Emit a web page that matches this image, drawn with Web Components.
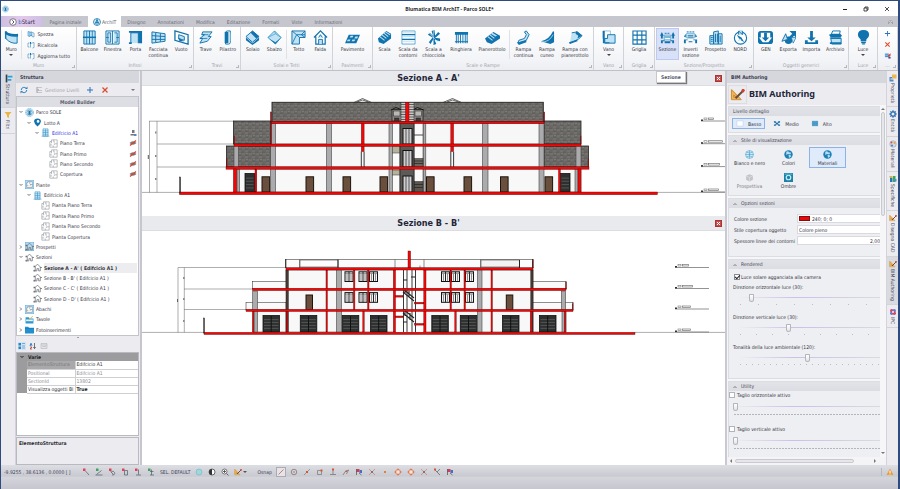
<!DOCTYPE html>
<html lang="it">
<head>
<meta charset="utf-8">
<title>Blumatica BIM ArchIT - Parco SOLE*</title>
<style>
html,body{margin:0;height:100%}
body{font:5px/6px "DejaVu Sans Condensed","DejaVu Sans",sans-serif;color:#34343f;background:#2f4a7d;overflow:hidden}
</style>
</head>
<body>
<bim-app></bim-app>
<script>
const B='#1173ae',L='#bfe2f4',K='#555960';
const p=(d,f='none',s=B,w=1)=>`<path d="${d}" fill="${f}" stroke="${s}" stroke-width="${w}"/>`;
const f=(d,c=B)=>`<path d="${d}" fill="${c}"/>`;
const plan=c=>p('M4.500 1.500H14.500V14.500H1.500V4.500H4.500z',c,'#8a8d92',1)+p('M4.500 4.500v3M8.500 1.500v4h2M14.500 8.500H9.500v2M1.500 10.500h4M7.500 14.500v-3','none','#8a8d92',1);
const house=p('M2 8l6-6 6 6M4 7v7h3v-4h3v4h3V7M1 13h3M13 8h3','none','#6a6d74',1.3)+f('M1 5h3v2H1zM1 13h3v2H1z','#6a6d74');
const snap=(a,c)=>f('M2 1h5v5H2z',c)+p(a,'none','#4f5a66',1.4);
const ICONS={
muro:f('M1 2l2-1v9l-2-1z')+p('M2 2q4 4 12 3v9q-7 1-12-5z',L)+f('M1 1q5 4 14 3v3Q6 8 1 4z'),
mini:p('M2 3l4 1v9l-4-1zM6 4h4v7H6',L)+p('M9 5l5 1v8l-4-1V7','#fff'),
mini2:p('M2 4h3M2 4v8h3M7 5l7-2v10l-3 1M7 4v9','#fff')+f('M6 2h2v4H6z'),
balcone:p('M2 1h12v14H2zM8 1v14',L)+p('M2 8h12M5 1v14M11 1v14','none',B,.8)+f('M1 7h14v1.6H1z'),
finestra:p('M1 1h14v14H1z','#e8f4fa')+p('M8 1v14M3 3h3v10H3zM10 3h3v10h-3M1 8h3M12 8h3',L,B,.9),
porta:p('M2 2h12v12',L)+p('M3 14V3h8v11',L)+f('M1 1h14v2H1zM11 3h4v11h-4zM1 13h3v2H1z'),
facciata:p('M1 2l14 2v8L1 14z',L)+p('M5 3v10M10 3.500v9M1 6l14 1M1 10h14'),
vuoto:p('M1 1l14 4v10L1 11z','#fff',B,1.4)+p('M5 5l6 2v4L5 9z',L)+f('M4 8l7 4H6z'),
trave:p('M5 2h10l-4 5h3l-4 5-8 2 3-5H2l5-4H4z',L)+p('M4 5h7M2 9h8','none',B,.8),
pilastro:p('M6 3q0-2 2-2h3v12q0 2-2 2H6z','#fff')+f('M5 2h4v12H5z')+f('M10 3h1v9h-1z',L),
solaio:p('M8 1l7 6-7 6-7-6z',L)+f('M1 8l7 6 7-6v3l-7 5-7-5z')+f('M8 1l7 6-3 2-6-6z'),
sbalzo:p('M8 1l7 7-6 7-8-7z',L,'#3c9ac9')+p('M8 1l1 3 6 4M9 4L1 8','none','#3c9ac9',.7)+f('M2 9l7 6 6-7-6 5z'),
tetto:p('M1 1h14v7h-6v7H1z',L)+p('M1 1l5 4h9M1 15l5-10M9 8L6 5M15 1l-4 4M15 8l-4-3','none',B,.9),
falda:p('M1 8l7-7 7 7M3 7v8h10V7','#fff',B,1.3)+p('M6 15v-5h4v5M6 8l2-3 2 3',L),
pavimento:f('M4 5h12l-4 9H0z')+f('M6 6h3l-1 2H5zM11 7h3l-1 2h-3zM3 10h3l-1 2H2zM8 10h3l-1 2H7z',L),
scala:f('M1 9L10 1l5 3v5l-8 6-5-2z')+p('M3 7l5 4M5 5l5 4M7 3l5 4M9 2l5 3','none',L,1.1),
contorni:p('M1 1h14M1 15h14M1 1v14M15 1v14','none','#3c9ac9',.8)+p('M1 5h14M1 10h14','none',B,1.4)+p('M2 3h12M2 7h12M2 12h12','none',L,1),
chiocciola:f('M8 8L6 1l3-1 1 8zM8 8l5-6 2 2-6 5zM8 8l7 1v3l-7-2zM8 8l3 7-3 1-1-7zM8 9l-3 6-2-2 4-5zM7 8L2 5l2-2 4 4z')+p('M8 0v15M3 3l10 10','none',L,.6),
ringhiera:f('M1 2h14v3H1zM2 5h1v9H2zM4 5h1v9H4zM6.500 5h1v9h-1zM9 5h1v9H9zM11.500 5h1v9h-1zM13.500 5h1v9h-1zM1 12h14v1H1z'),
pianerottolo:f('M0 9L9 2l7 4v3l-9 6-5-2z')+p('M3 7l5 4M5 5l5 4','none',L,1.1)+f('M8 3l5 3-2 1-5-3z',L),
rampac:p('M2 14l9-3 3-6-3-4-2 1 2 3-2 4-6 2z',L)+f('M1 13h2l8-2v2l-8 3z'),
rampacu:f('M1 12Q10 10 14 1l1 1v11l-4 2z')+p('M1 13q9 0 13-8','none',L,.8),
rampap:p('M4 3l6-1 5 4-4 4-9 4',L)+f('M9 1l6 5-5 3 1-3-3-2zM1 13l9-3v2l-8 3z'),
vano:p('M2 1h8v8H2z','#fff','#8abfdc')+p('M7 5h8v9H4V9h3z',L,B)+f('M2 1h2v12h5v1H2z'),
griglia:p('M1 1h14v14H1zM1 5.500h14M1 10.500h14M5.500 1v14M10.500 1v14','#fff',B,1.2),
sezione:p('M4.500 5.500h7v5h-7z','#f2f8fd','#3c9ac9',.8)+`<path d="M5 3.500h6" stroke="${B}" stroke-dasharray="2 1"/>`+f('M0 6l2-4 2 4H3v3H1V6zM16 6l-2-4-2 4h1v3h2V6zM5 7h6v1H5zM1 11h4v1H3v2H1zM15 11h-4v1h2v2h2zM5 12h6v2H5z'),
inverti:p('M4 3.500h8v5H4z','#fff','#3c9ac9',.8)+`<path d="M4 2h8" stroke="${B}" stroke-dasharray="2 1"/>`+f('M5 5h6v1H5zM5 7h6v1H5zM1 7l2-3v4zM15 7l-2-3v4zM1 10h4v1H3v3H1zM15 10h-4v1h2v3h2zM6 12h4v1H6z'),
prospetto:p('M2 6h4v9H2zM6 2l5-1v14H6zM11 4h4v11h-4z',L)+p('M3 8h2M3 10h2M3 12h2M8 4v9M13 6v7M10 4v9'),
nord:`<circle cx="8" cy="8.500" r="6.500" fill="#fff" stroke="${B}" stroke-width="1.200"/>`+f('M4 5l5 3 3 5-5-3z')+f('M5 12l2-3 2 1zM6 0h4v5H6z',L)+p('M6 5V1l4 4V1'),
gen:`<rect x="0" y="1" width="16" height="14" rx="3" fill="${B}"/>`+f('M3 3h10v5h2l-4 5H5L1 8h2z','#fff')+f('M6.500 3h3v5h2.500L8 12 4 8h2.500z'),
esporta:f('M9 1h7v7l-2-2-4 4-2-2 4-4z')+`<circle cx="8" cy="11" r="4" fill="${B}"/>`+p('M1 12L5 4l2 6z',L)+p('M11 8h5l-3 6z',L,B,.7),
importa:f('M6.500 1h3v7h3L8 12 3.500 8h3zM1 11h3v2h8v-2h3v4H1z'),
archivio:p('M3 6l2-5h8l-1 5','#fff')+f('M1 5l3-1h9l2 2-2 2H3z')+p('M3 9h11v6H4z',L)+f('M2 13h12v2H2zM2 8h12v1H2z'),
luce:f('M8 0q6 0 6 5 0 3-3 5v2H5v-2Q2 8 2 5q0-5 6-5zM5.500 12.500h5V14h-5zM6.500 14.500h3v1h-3z'),
plus:f('M7 2h2v5h5v2H9v5H7V9H2V7h5z','#2e6fc0'),
cross:p('M3 3l10 10M13 3L3 13','none','#e0482c',2.4),
dbdel:f('M2 3h9v9H2z','#7db0dc')+f('M3 6h7v1H3zM3 9h7v1H3z','#3568a6')+f('M9 8l6-5v5l-4 4z','#d04040')+f('M10 11h5v4h-5z','#444c88'),
start:`<circle cx="8" cy="8" r="6.500" fill="#fff" stroke="#333" stroke-width="1.200"/>`+p('M6.500 4.500L10 8l-3.500 3.500','none','#222',1.5),
archit:`<circle cx="8" cy="8" r="7" fill="#d9eefa" stroke="${B}" stroke-width="1.500"/>`+p('M4 12l4-9 4 9M5 9h6M8 3v11','none',B,1.6),
refresh:p('M2.500 8a5.500 5.500 0 0 1 10-3M13.500 8a5.500 5.500 0 0 1-10 3','none','#2e83c0',2)+f('M10 6h5V1zM6 10H1v5z','#2e83c0'),
levels:f('M3 2h2v12H3zM5 3h9v1H5zM5 8h9v1H5zM5 12h9v1H5z','#9fa2a8')+f('M3 6h5v4H3z','#b7b9be'),
model:`<circle cx="8" cy="8" r="7" fill="#d7edf9" stroke="#3c9ac9" stroke-dasharray="3 1"/><circle cx="8" cy="8" r="4.500" fill="#fff" stroke="${B}"/>`+f('M6 5h4v7H6z'),
pin:f('M8 1q6 0 6 5 0 4-6 9-6-5-6-9 0-5 6-5z')+`<circle cx="9" cy="6" r="2.300" fill="#fff"/>`,
building:p('M3.500 1.500h9v13h-9z','#d9eefa','#2e8ec4')+p('M8 2v12M3 5h10M3 8h10M3 11h10M1 14.500h14','none','#2e8ec4',1),
plan:plan('#fff'),planb:`<rect width="16" height="16" fill="#b5daf0" stroke="#3c9ac9"/>`+p('M5 3h8v10H3V5h2zM8.500 3v4M13 8H9v2M3 9.500h3','#fff','#7d868e',1),
house:house,houseb:`<rect width="16" height="16" fill="#b5daf0" stroke="#3c9ac9"/>`+house,
tavole:f('M1 4h6l1 2h7v9H1z','#2e9ad2')+f('M2 8h12v3H2z','#e8f5fc')+p('M6 9l8-7','none','#e6b43c',1.6),
foto:f('M0 3h6l1 2h9v10H0z','#2090d0')+f('M0 6h16v1H0z','#1678b4'),
user:f('M6 2h5v6H6zM3 10h10v3H3z','#74777d')+f('M10 10h5v4h-5z','#5d85b5'),
eyeoff:f('M1 8q7-7 14 0-7 7-14 0z','#7a7a80')+p('M2 13L14 3','none','#d8442c',2.4),
az:f('M3 2h2l2 6H5V6H3.500v2H1z','#2e83c0')+p('M2 10h4l-4 4h4','none','#b03030',1.400)+p('M11 2v11M8.500 10l2.500 3 2.500-3','none','#333',1.3),
cat:f('M1 2h5v5H1zM1 9h5v5H1z','#2e83c0')+f('M8 2h6v2H8zM8 6h6v1H8zM8 9h6v2H8zM8 13h6v1H8z','#7ba9cb'),
page:p('M2 3h12v10H2zM2 6h12M5 9h7','#e3e4e8','#aaacb2',1),
dock:f('M3 1h3v14H3z','#3a3f48')+f('M6 3h9v3H6zM6 9h7v3H6z','#2aa0dc'),
filter:f('M1 2h14l-5 6v6l-4-2V8z','#eeb345'),
set:f('M1 3l1-1 10 11H1z','#f2b65a')+p('M1.500 3v10.500H12zM4 8.500v2.500h3z','none','#c98a34',1)+p('M6 12l8-8','none','#6b4b3a',2)+f('M13 2l2 0 1 2-2 2-2-2z','#d4432f'),
prop:f('M1 6h8v9H1z','#5089c4')+f('M6 1h9v8H6z','#eeb651')+f('M3 9h7v2H3z','#e8f0fa'),
gear:`<circle cx="8" cy="8" r="4.500" fill="none" stroke="#2e74b8" stroke-width="3"/>`+p('M8 0v3M8 13v3M0 8h3M13 8h3M2.500 2.500l2 2M11.500 11.500l2 2M2.500 13.500l2-2M11.500 4.500l2-2','none','#2e74b8',1.8),
palette:`<circle cx="8" cy="8" r="6.500" fill="#d6dae2" stroke="#8c93a0"/><circle cx="5" cy="5" r="2" fill="#e05040"/><circle cx="11" cy="6" r="2" fill="#e9a23b"/><circle cx="6" cy="11" r="2" fill="#3e82c6"/>`,
spec:f('M2 5h5v9H2z','#2b74b5')+f('M8 2h5v12H8z','#3fa456')+f('M1 2h6v3H1z','#e1b33c')+f('M11 8h4v5h-4z','#3a9bd6'),
ifc:`<circle cx="5.500" cy="5.500" r="3.500" fill="#d34560"/><circle cx="10.500" cy="5.500" r="3.500" fill="#6d77c9"/><circle cx="5.500" cy="10.500" r="3.500" fill="#6d77c9"/><circle cx="10.500" cy="10.500" r="3.500" fill="#d34560"/><circle cx="8" cy="8" r="1.800" fill="#fff"/>`,
medio:f('M1 3h5v3H1zM10 3h5v3h-5zM5 6h6v4H5zM1 10h5v3H1zM10 10h5v3h-5z','#2e83ba')+p('M1 3l14 10M15 3L1 13','none','#1c5b88',1),
alto:f('M1 2h14v12H1z','#5fa9d4')+p('M1 5h14M1 8h14M1 11h14M4 2v12M8 2v12M12 2v12','none','#3b88b8',.8),
basso:p('M1 2h14v12H1z','#fff','#b6c6da',1),
globe:`<circle cx="8" cy="8" r="7" fill="#d8edf8" stroke="#3c9ac9"/>`+p('M1 8h14M8 1v14M3 4q5 3 10 0M3 12q5-3 10 0','none','#3c9ac9',1),
globec:`<circle cx="8" cy="8" r="7.500" fill="#1f7fb5"/>`+f('M4 3q4-2 5 1l4 1-2 3-4-1-3 2zM8 9q4-1 5 2l-4 3z','#aee0f5'),
persp:f('M8 2l6 3v7l-6 3-6-3V5z','#c3c4c8')+p('M2 5l6 3 6-3M8 8v7','none','#e8e8ea',1),
ombre:`<rect width="16" height="16" fill="#1f7fa8"/><circle cx="8" cy="8" r="4" fill="none" stroke="#bff0fa" stroke-width="2.200"/>`+f('M1 1h14v2H1z','#54b5d0'),
s1:snap('M7 6l7 8','#e0405a'),s2:snap('M1 14h14M3 13L13 5','#3da35a'),s3:snap('M6 8q5-4 7 1t-5 5M5 7l6 6','#e0405a'),s4:snap('M7 5h6v9H7z','#e0405a'),s5:snap('M9 3v10M4 14h10','#e0405a'),s6:snap('M6 7h7M9 3v11M6 14h8','#3da35a'),
world:`<circle cx="8" cy="8" r="6" fill="#9fd7dc" stroke="#57b4bb"/>`,half:`<circle cx="8" cy="8" r="6" fill="#fff" stroke="#333" stroke-width="1.400"/>`+f('M8 2v12a6 6 0 0 1 0-12z','#333'),
lens:`<circle cx="7" cy="7" r="5" fill="#fff" stroke="#444" stroke-width="1.400"/>`+p('M11 11l4 4M7 4v6M4 7h6','none','#444',1.6),
line:p('M3 13L13 3','none','#d8542e',1.5),circ:`<circle cx="8" cy="8" r="5.500" fill="none" stroke="#666" stroke-width="1.300"/><circle cx="8" cy="8" r="1.500" fill="#d8542e"/>`,
mid:p('M2 14L14 2','none','#777',1.3)+f('M6 6h4v4H6z','#d8542e'),box:p('M3 5h8v8H3z','none','#666',1.2)+f('M9 3h4v4H9z','#d8542e'),
perp:p('M8 3v10M2 13h12','none','#666',1.300)+f('M6 1h4v4H6z','#d8542e'),tan:p('M2 14q3-9 12-10M9 12l4-8','none','#666',1.3)+f('M7 5h3v3H7z','#d8542e'),
flag:f('M3 2h6v6H3z','#d33f52')+f('M9 4h5v6H9z','#4c6bc5')+p('M3 2v12M8 10l5 4','none','#444',1.3),
xx:p('M2 2l12 12M14 2L2 14','none','#d8542e',1)+f('M6 6h4v4H6z','#777'),dot:f('M6 6h4v4H6z','#e0803c'),
quad:`<circle cx="8" cy="8" r="5" fill="#fbe4d8" stroke="#d8744e" stroke-width="1.600"/>`+p('M8 1v4M8 11v4M1 8h4M11 8h4','none','#d8542e',1.5),
rays:p('M2 2l12 12M14 2L8 8','none','#555',1.300)+f('M2 1h4v4H2z','#d8542e'),
warn:f('M8 1l7 13H1z','#e89c3a')+f('M7 5h2v5H7zM7 11h2v2H7z','#fff')
};
function define(tag,css,html,setup){
  const t=document.createElement('template');
  t.innerHTML=`<style>*{box-sizing:border-box}button,input,select{font:inherit;color:inherit;margin:0;padding:0;border:0;background:none;border-radius:0}${css}</style>${typeof html==='string'?html:''}`;
  customElements.define(tag,class extends HTMLElement{
    connectedCallback(){
      if(this.shadowRoot)return;
      const root=this.attachShadow({mode:'open'});
      root.append(t.content.cloneNode(true));
      if(typeof html==='function')root.innerHTML+=html(this,n=>this.getAttribute(n)||'');
      if(setup)setup(this,root);
    }
  });
}
define('ui-icon',`:host{display:block;flex:none;width:8px;height:8px}svg{display:block;width:100%;height:100%}`,
 (e,a)=>`<svg viewBox="0 0 16 16" aria-hidden="true">${ICONS[a('name')]||''}</svg>`);

/* ---------- window chrome ---------- */
define('title-bar',`:host{display:grid;grid-template-columns:1fr auto 1fr;align-items:center;height:15px;background:#fff;font:bold 5px/6px "Noto Sans",sans-serif;color:#2a2a33}
ui-icon{width:7px;margin-left:1px}nav{display:flex;justify-content:flex-end;gap:15px;padding-right:8px}button{width:6px;height:8px}svg{display:block;width:6px;height:8px}`,
`<ui-icon name="model"></ui-icon><span>Blumatica BIM ArchIT - Parco SOLE*</span><nav>
<button aria-label="Riduci"><svg viewBox="0 0 6 8"><path d="M1 4.500h4" stroke="#222"/></svg></button>
<button aria-label="Ripristina"><svg viewBox="0 0 6 8"><path d="M1 3h3v3H1zM2 3V2h3v3H4" fill="none" stroke="#222" stroke-width=".8"/></svg></button>
<button aria-label="Chiudi"><svg viewBox="0 0 6 8"><path d="M1 2l4 4M5 2L1 6" stroke="#222" stroke-width=".8"/></svg></button></nav>`);
define('ribbon-tabs',`:host{display:flex;align-items:stretch;height:11px;background:#c6c7ce}
button{display:flex;align-items:center;justify-content:center;gap:1px;color:#6a6b74;flex:none;padding:0 6px;white-space:nowrap}
.start{background:linear-gradient(90deg,#cdbfe0,#e3c9ec 50%,#cdbfe0);color:#2c2848;font-size:6px;width:42px;padding:0}.start b{color:#2a78c8;font-weight:400}
.home{width:45px;padding:0}.on{background:#fff;color:#4f5a66;padding:0 5px}i{flex:1}.up{padding:0 5px}.up svg{width:5px;height:5px}`,
`<button class="start"><ui-icon name="start"></ui-icon><span><b>b</b>Start</span></button><button class="home">Pagina iniziale</button><button class="on"><ui-icon name="archit"></ui-icon>ArchIT</button>
<button>Disegno</button><button>Annotazioni</button><button>Modifica</button><button>Editazione</button><button>Formati</button><button>Viste</button><button>Informazioni</button><i></i><button class="up" aria-label="Comprimi"><svg viewBox="0 0 5 5"><path d="M.5 3l2-2 2 2v1.500l-2-2-2 2z" fill="#fff" stroke="#777" stroke-width=".6"/></svg></button>`);
define('ribbon-group',`:host{display:flex;flex-direction:column;min-width:0;border-right:1px solid #d2d3d9;background:linear-gradient(#fff,#f3f4f7 75%,#eceef2);position:relative}
.c{display:flex;flex:1;padding:1px 1px 0}.k{height:9px;line-height:8px;text-align:center;color:#a3a4ac;white-space:nowrap}
.k::after{content:"";position:absolute;right:1px;bottom:2px;border:1px solid #b4b5bd;border-width:0 1px 1px 0;width:2px;height:2px}`,
 (e,a)=>`<div class="c"><slot></slot></div><div class="k">${a('caption')}</div>`);
define('ribbon-button',`:host{display:block;min-width:0;position:relative}
button{display:flex;flex-direction:column;align-items:center;width:100%;height:32px;padding-top:2px;text-align:center;white-space:nowrap;line-height:6px}
ui-icon{width:15px;height:15px;margin-bottom:1px}.d{width:0;height:0;border:2px solid transparent;border-top-color:#444;border-bottom:0;margin-top:2px}
:host([active]) button{background:#d9e1f8;border:1px solid #bccaf0;padding-top:1px}
.tip{position:absolute;z-index:5;left:0;top:43px;background:#fff;border:1px solid #c6c6cc;box-shadow:1px 1px 1px #777;padding:2px 4px;font:bold 5px/6px "DejaVu Sans Condensed",sans-serif;color:#555a70}`,
 (e,a)=>`<button><ui-icon name="${a('icon')}"></ui-icon><span><slot></slot></span>${e.hasAttribute('drop')?'<span class="d"></span>':''}</button>${a('tip')?`<div class="tip" role="tooltip">${a('tip')}</div>`:''}`,
 (e)=>{e.style.flex=(e.getAttribute('w')||1)+' 1 0'});
define('ribbon-mini',`:host{display:block}button{display:flex;align-items:center;gap:2px;height:11px;white-space:nowrap}ui-icon{width:8px;height:8px}`,
 (e,a)=>`<button><ui-icon name="${a('icon')}"></ui-icon><slot></slot></button>`);
define('ribbon-bar',`:host{display:grid;grid-template-columns:76fr 117fr 47fr 92fr 40fr 221fr 30fr 31fr 99fr 95fr 29fr 20fr;height:42px;position:relative;z-index:3}
.col{display:flex;flex-direction:column;flex:54 1 0;padding:0 0 0 4px}.sep{width:1px;margin:2px 1px;background:#e0e1e6}.tools{display:flex;flex-direction:column;align-items:center;gap:4px;flex:1;padding-top:2px}.tools button{height:7px}.tools ui-icon{width:7px;height:7px}`,
`<ribbon-group caption="Muro"><ribbon-button w="21" icon="muro" drop>Muro</ribbon-button><span class="sep"></span><div class="col"><ribbon-mini icon="mini">Spezza</ribbon-mini><ribbon-mini icon="mini2">Ricalcola</ribbon-mini><ribbon-mini icon="mini2">Aggiorna tutto</ribbon-mini></div></ribbon-group>
<ribbon-group caption="Infissi"><ribbon-button w="23" icon="balcone">Balcone</ribbon-button><ribbon-button w="24" icon="finestra">Finestra</ribbon-button><ribbon-button w="22" icon="porta">Porta</ribbon-button><ribbon-button w="24" icon="facciata">Facciata<br>continua</ribbon-button><ribbon-button w="22" icon="vuoto">Vuoto</ribbon-button></ribbon-group>
<ribbon-group caption="Travi"><ribbon-button w="22" icon="trave">Trave</ribbon-button><ribbon-button w="23" icon="pilastro">Pilastro</ribbon-button></ribbon-group>
<ribbon-group caption="Solai e Tetti"><ribbon-button w="22" icon="solaio">Solaio</ribbon-button><ribbon-button w="22" icon="sbalzo">Sbalzo</ribbon-button><span class="sep"></span><ribbon-button w="22" icon="tetto">Tetto</ribbon-button><ribbon-button w="22" icon="falda">Falda</ribbon-button></ribbon-group>
<ribbon-group caption="Pavimenti"><ribbon-button icon="pavimento">Pavimento</ribbon-button></ribbon-group>
<ribbon-group caption="Scale e Rampe"><ribbon-button w="21" icon="scala">Scala</ribbon-button><ribbon-button w="26" icon="contorni">Scala da<br>contorni</ribbon-button><ribbon-button w="25" icon="chiocciola">Scala a<br>chiocciola</ribbon-button><ribbon-button w="30" icon="ringhiera">Ringhiera</ribbon-button><ribbon-button w="32" icon="pianerottolo">Pianerottolo</ribbon-button><span class="sep"></span><ribbon-button w="25" icon="rampac">Rampa<br>continua</ribbon-button><ribbon-button w="22" icon="rampacu">Rampa<br>cuneo</ribbon-button><ribbon-button w="34" icon="rampap">Rampa con<br>pianerottolo</ribbon-button></ribbon-group>
<ribbon-group caption="Vano"><ribbon-button icon="vano" drop>Vano</ribbon-button></ribbon-group>
<ribbon-group caption="Griglia"><ribbon-button icon="griglia">Griglia</ribbon-button></ribbon-group>
<ribbon-group caption="Sezione/Prospetto"><ribbon-button w="23" icon="sezione" active tip="Sezione">Sezione</ribbon-button><ribbon-button w="24" icon="inverti">Inverti<br>sezione</ribbon-button><ribbon-button w="26" icon="prospetto">Prospetto</ribbon-button><ribbon-button w="24" icon="nord">NORD</ribbon-button></ribbon-group>
<ribbon-group caption="Oggetti generici"><ribbon-button w="22" icon="gen">GEN</ribbon-button><ribbon-button w="23" icon="esporta">Esporta</ribbon-button><ribbon-button w="24" icon="importa">Importa</ribbon-button><ribbon-button w="24" icon="archivio">Archivio</ribbon-button></ribbon-group>
<ribbon-group caption="Luce"><ribbon-button icon="luce" drop>Luce</ribbon-button></ribbon-group>
<ribbon-group caption="..."><div class="tools"><button aria-label="Aggiungi"><ui-icon name="plus"></ui-icon></button><button aria-label="Elimina"><ui-icon name="cross"></ui-icon></button><button aria-label="Gestisci"><ui-icon name="dbdel"></ui-icon></button></div></ribbon-group>`);

/* ---------- docked side tabs ---------- */
define('dock-tab',`:host{display:block}button{display:flex;flex-direction:column;align-items:center;gap:1px;width:100%;padding:3px 0;color:#44455a;border-bottom:1px solid #d3d4da}
span{writing-mode:vertical-rl;white-space:nowrap}:host([on]) button{background:#dadbe1}ui-icon{width:8px;height:8px}:host([big]) ui-icon{width:9px;height:9px}`,
 (e,a)=>`<button><ui-icon name="${a('icon')}"></ui-icon><span><slot></slot></span></button>`);
define('panel-head',`:host{display:block;height:12px;padding:0 4px;font-weight:bold;line-height:12px;color:#3a3b52;background:#d6d7dc}`,`<slot></slot>`);

/* ---------- model tree ---------- */
define('tree-row',`:host{display:flex;align-items:center;gap:2px;min-height:9px;padding-right:1px;white-space:nowrap;background:#fff}
.a{width:4px;color:#555}svg{display:block;width:4px;height:4px}.t{flex:1}:host([link]) .t{color:#2b2be0}:host([sel]) .t{font-weight:bold;line-height:10px;background:#ededf0}ui-icon{width:9px;height:9px}.m{width:8px;height:8px}`,
 (e,a)=>`<span class="a">${a('open')?`<svg viewBox="0 0 4 4"><path d="${a('open')=='y'?'M.5 1L2 2.500 3.500 1':'M1 .5L2.500 2 1 3.500'}" fill="none" stroke="#555" stroke-width=".8"/></svg>`:''}</span><ui-icon name="${a('icon')}"></ui-icon><span class="t"><slot></slot></span>${a('mark')?`<ui-icon class="m" name="${a('mark')}"></ui-icon>`:''}`,
 (e)=>{e.style.paddingLeft=(2+8*Number(e.getAttribute('lv')||0))+'px'});
define('tree-panel',`:host{display:flex;flex-direction:column;flex:1;min-height:0;border:1px solid #c3c4ca;background:#fff}
h3{margin:0;height:10px;font:bold 5px/10px "DejaVu Sans Condensed",sans-serif;text-align:center;background:#dddee3;color:#5e5f70}
.rows{flex:1;display:grid;grid-auto-rows:1fr;min-height:0}`,
()=>{const r=[[0,'model','Parco SOLE','y'],[1,'pin','Lotto A','y'],[2,'building','Edifcicio A1','y','user','link'],[3,'plan','Piano Terra','','eyeoff'],[3,'plan','Piano Primo','','eyeoff'],[3,'plan','Piano Secondo','','eyeoff'],[3,'plan','Copertura','','eyeoff'],[0,'planb','Piante','y'],[1,'building','Edifcicio A1','y'],[2,'plan','Pianta Piano Terra'],[2,'plan','Pianta Piano Primo'],[2,'plan','Pianta Piano Secondo'],[2,'plan','Pianta Copertura'],[0,'houseb','Prospetti','n'],[0,'house','Sezioni','y'],[1,'house',"Sezione A - A' ( Edifcicio A1 )",'','','sel'],[1,'house',"Sezione B - B' ( Edifcicio A1 )"],[1,'house',"Sezione C - C' ( Edifcicio A1 )"],[1,'house',"Sezione D - D' ( Edifcicio A1 )"],[0,'planb','Abachi','n'],[0,'tavole','Tavole','n'],[0,'foto','Fotoinserimenti','n']];
return `<h3>Model Builder</h3><div class="rows">${r.map(x=>`<tree-row lv="${x[0]}" icon="${x[1]}" open="${x[3]||''}" mark="${x[4]||''}" ${x[5]||''}>${x[2]}</tree-row>`).join('')}</div>`});
define('property-grid',`:host{display:flex;flex-direction:column;background:#fff;border:1px solid #b9bac0;height:84px}
table{border-collapse:collapse;width:100%;table-layout:fixed}td,th{height:8px;padding:0 0 0 1px;line-height:7px;border-bottom:1px solid #d0d0d4;white-space:nowrap;font-weight:400;text-align:left;color:#8a8b90}
th{border-right:1px solid #d0d0d4}col.g{width:10px}col.n{width:48px}td.g{background:#9c9c9e;border:0;padding:0 0 0 3px}svg{display:block;width:4px;height:4px}
thead th{background:#9c9c9e;color:#222;font-weight:bold;border:0}.s th{background:#a9a9ab;color:#77777a}.s td,.v th{color:#333}.v td{font-weight:bold;color:#222}`,
`<table><colgroup><col class="g"><col class="n"><col></colgroup><thead><tr><td class="g"><svg viewBox="0 0 4 4"><path d="M.5 1L2 2.500 3.500 1" fill="none" stroke="#222"/></svg></td><th colspan="2">Varie</th></tr></thead>
<tbody><tr class="s"><td class="g"></td><th>ElementoStruttura</th><td>Edifcicio A1</td></tr><tr><td class="g"></td><th>Positional</th><td>Edifcicio A1</td></tr><tr><td class="g"></td><th>SectionId</th><td>13802</td></tr><tr class="v"><td class="g"></td><th>Visualizza oggetti BI</th><td>True</td></tr></tbody></table>`);
define('structure-panel',`:host{display:flex;flex-direction:column;min-width:0;background:#ececf0;padding-right:1px}
.bar{display:flex;align-items:center;gap:7px;height:13px;padding:0 4px;color:#a5a6ad}.bar button{display:flex;align-items:center;gap:2px;color:#a2a3aa;white-space:nowrap}.bar i{flex:1}
.split{height:4px;text-align:center;line-height:4px}.split::after{content:"";display:inline-block;border:1px solid transparent;border-top-color:#555;vertical-align:top;margin-top:1px}
.pb{display:flex;align-items:center;gap:3px;height:12px;padding-left:2px}.pb button:first-child{background:#cfe3f6}.d{border:2px solid transparent;border-top-color:#777;border-bottom:0}
.desc{border:1px solid #b9bac0;height:28px;margin-top:1px;padding:2px;font-weight:bold;color:#2c2c33}`,
`<panel-head>Struttura</panel-head><div class="bar"><button aria-label="Aggiorna"><ui-icon name="refresh"></ui-icon></button><button><ui-icon name="levels"></ui-icon>Gestione Livelli</button><button aria-label="Aggiungi"><ui-icon name="plus"></ui-icon></button><button aria-label="Elimina"><ui-icon name="cross"></ui-icon></button><i></i><span class="d"></span></div>
<tree-panel></tree-panel><div class="split"></div><div class="pb"><button aria-label="Per categoria"><ui-icon name="cat"></ui-icon></button><button aria-label="Alfabetico"><ui-icon name="az"></ui-icon></button><button aria-label="Pagine"><ui-icon name="page"></ui-icon></button></div>
<property-grid></property-grid><div class="desc">ElementoStruttura</div>`);

/* ---------- section drawings ---------- */
const R=(x,y,x2,y2,c,s='#222',w=.5)=>`<rect x="${x}" y="${y}" width="${x2-x}" height="${y2-y}" fill="${c}" stroke="${s}" stroke-width="${w}"/>`;
const D=(d,s='#555',w=.5)=>`<path d="${d}" fill="none" stroke="${s}" stroke-width="${w}"/>`;
const RED='#f00808',DR='#5a0505';
const red=(x,y,x2,y2)=>R(x,y,x2,y2,RED,DR,.4);
const col=(x,x2,y,y2)=>R(x,y,x2,y2,'#ababad','#444',.6);
const garage=(x,x2,y,y2)=>R(x,y,x2,y2,'#2e3030','#111',.8)+[.25,.42,.6,.78].map(t=>D(`M${x+1} ${y+(y2-y)*t}H${x2-1}`,'#6c6e6e',.6)).join('');
const level=(x,y,w,t)=>D(`M${x} ${y}H${x+w}`,'#777',.8)+`<rect x="${x}" y="${y-1.500}" width="2" height="1.500" fill="#333"/>`+R(x+3,y-3,x+6,y-1.500,'none','#777',.6)+R(x+7.500,y-3,x+7.500+t,y-1.500,'none','#777',.7);
function sectionA(){
 const roof='url(#tile)';let s='';
 s+=D('M149 121.200H234M157 144H234M157 167H227M142 192.400H179M657 192.400H725M149.500 121V192.500M157 121V192.500','#777',.6)+D('M155.800 131.500v2M155.800 155v2M155.800 178v2M148.300 155v4','#555',1);
 s+=D('M354 102.500l8.500-4 9 4M357 102l5.500-2 6 2M443 102.500l9.500-4 9 4M447 102l5.500-2 6 2','#222',.7);
 s+=R(272,102.300,543.300,121.500,roof,'#222',.9)+R(233.500,121,271,144,roof,'#222',.8)+R(544,121,581,144,roof,'#222',.8)+R(226.500,146,271,167,roof,'#222',.8)+R(544,146,588.500,167,roof,'#222',.8);
 s+=R(272,123.500,543.500,144,'#f7f7f7')+R(272,146,543.500,167,'#f7f7f7')+R(234,169,581,192,'#f8f8f8');
 for(const[a,b]of[[270.500,275.500],[326.500,331.500],[389,392.300],[423,425.800],[482.500,488],[539,544]])s+=col(a,b,123.500,192);
 s+=col(234,238.500,146,167)+col(576,581,146,167)+col(237,239.500,169,192)+col(575,578,169,192);
 for(const x of[262,306,343,380,426.500,464,500.500,545])s+=R(x,176.800,x+7.600,192,'#6b4f3d','#1d1410',1);
 s+=garage(245,254.500,173.500,192)+garage(560.500,570,173.500,192);
 s+=R(392.300,123,400,192,'#fafafa')+R(392.300,146,400,153,'#b5b19a','#333')+R(392.300,170,400,175,'#b5b19a','#333')+R(414,123,423,192,'#fafafa')+D('M414 135H423','#222',.8);
 s+=R(414,158.500,423,167,'#6d665e')+R(414,181.500,423,192,'#5d564e')+D('M414 161h9M414 163.500h9M414 184.500h9M414 187.500h9','#222',.7);
 s+=R(400,123,414,192,'#5c5b58','#222',.8);for(const[y,z]of[[128.500,144],[150.500,167],[176,192]])s+=R(403,y,412,z,'#cfcfd2','#111',1)+D(`M406 ${y}V${z}M409 ${y}V${z}`,'#222',.7);
 for(const x of[392,413.500])s+=R(x,109.500,x+9.500,121,'#8b8a86','#222',.8)+D(`M${x-1} 110l5-2.500 6 2.500`,'#111',.9)+R(x+1.500,111,x+8,116,'#b9b8b4')+R(x+2.500,118,x+7,121,'#3a3a3a');
 s+=R(401,102.500,414,121.500,'#c9cac8')+D('M401 104.500h13M401 107h13M401 109.500h13M401 112h13M401 114.500h13M401 117h13M401 119.500h13','#333',.7)+red(405.500,102.500,409,122);
 for(const x of[361.300,450.800]){s+=red(x,123,x+2.800,151.500)+D(`M${x} 151.500V167M${x+2.800} 151.500V167`,'#222',.9)}
 s+=red(271,121.300,544,123.500)+red(234,144,581,146.300)+red(226,166.800,589,169.200)+red(179.500,192,657.500,194.700);
 s+=red(233.500,169,236.700,192)+red(255,169,256.800,192)+red(558.500,169,560.300,192)+red(578,169,581,192);
 s+=R(270.500,112,271.500,144,'#9a1010','#5a0c0c')+R(543.800,112,544.600,122,'#9a1010','#5a0c0c')+R(234,136,234.600,144,RED,DR,.4)+R(580.500,136,581,144,RED,DR,.4)+R(226.500,159,227,167,RED,DR,.4)+R(588,159,588.500,167,RED,DR,.4)+R(179.700,177,180.500,193,'#222');
 [[121,5],[143.700,14],[166.600,11],[192,10]].forEach(([y,t])=>s+=level(701,y,24,t));
 return s;
}
function sectionB(){
 let s=D('M178 267.500H286M184 289H252M184 309.500H246M142 332.400H204M635 332.400H725M178 267.500V332.500M184.300 267.500V332.500','#777',.6)+D('M177.500 299v3M183.800 277v2M183.800 298v2M183.800 320v2','#555',.9);
 s+=R(285.700,259.500,533,268,'#fbfbfb','#444',.6)+D('M299.500 259.500V268M395 259.500V268M424 259.500V268M420 268v-2.500M480.500 259.500V268','#444',.6)+R(300,260,338,267,'#fcfcfc','#444',.6)+R(481,260,519.500,267,'#f2f2f2','#444',.6)+D('M285.800 259V268M338 259.500V268M519.500 260V268M532.800 259V268','#222',1);
 s+=R(286,270,533,332,'#f8f8f8')+R(252.500,281.500,286,289,'#fafafa')+R(246,302.500,286,310,'#fafafa')+R(533,281.500,566,289,'#fafafa')+R(533,302.500,573,310,'#fafafa')+R(253,290,286,302,'#fafafa','none')+R(253,311,286,332,'#f8f8f8')+R(533,311,566,332,'#f8f8f8');
 s+=col(252.700,257.500,291,310)+col(254,257.500,311,332)+col(561.500,565.500,291,310)+col(562,564.500,311,332)+col(336.500,341.500,270,332)+col(477.500,482,270,332);
 s+=R(286,270,288.300,332,'#4a3a34')+R(530.800,270,533,332,'#4a3a34');
 for(const x of[345,359,369.500,441.500,451.500,465.500])for(const y of[271.800,292.600])s+=R(x,y,x+8,y+9.700,'#f4f4f4','#111',1)+D(`M${x+4} ${y}v9.700`,'#222',1)+D(`M${x+2} ${y+2}v7M${x+6} ${y+2}v7M${x} ${y+1.500}h8`,'#444',.6);
 s+=R(306,295,312.500,309.500,'#6b4f3d','#1d1410',1)+R(506.300,295,512.800,309.500,'#6b4f3d','#1d1410',1);
 for(const x of[263,300.300,342.300,370.500,431.800,460.300,502.500,539.500])s+=garage(x,x+16.500,315.500,332)+D(`M${x+8.200} 316V332`,'#111',1);
 s+=R(396,270,424,332,'#fdfdfd','none')+D('M403.500 270V332M407 270V332M412 270V332M415.500 270V332','#222',.9)+D('M403 289l11 9M403 292l11 9M403 309l11 9M403 313l11 9M405 288v5M409 291v6M405 309v7M410 313v7M403 280h4M411 277h4M403 322h4','#222',1.1);
 for(const[a,b,y]of[[395,403,295.500],[414.500,424,302.300],[395,403,316],[414.500,424,323.500]])s+=red(a,y,b,y+1.600);
 for(const[x,y,z]of[[326,270,332],[353.500,270,310],[367.600,270,310],[362.800,310,332],[450,270,310],[464,270,310],[454.800,310,332],[491,270,332],[286.500,311,332],[530.700,311,332],[564.500,311,332],[252.500,311,332]])s+=red(x,y,x+1.400,z);
 s+=red(393.300,270,395.500,332)+red(423.800,270,426,332);
 s+=red(408,251,410.600,268)+red(286,267.800,533,270)+red(252.500,288.200,566,290.600)+red(246,309.300,573,311.500)+red(204,332.300,635,334.500)+R(203.700,318,204.400,333,'#222')+R(532.600,260,533,268,RED,DR,.5)+R(565.800,282,566.200,289,RED,DR,.6)+R(572.600,303,573,310,RED,DR,.6);
 [[267.500,6],[288.500,10],[309,8],[332,8]].forEach(([y,t])=>s+=level(675,y,34,t));
 return s;
}
define('section-view',`:host{display:flex;flex-direction:column;background:#fff;min-height:0}
header{display:flex;align-items:center;height:15px;background:#e9eaee;border-bottom:1px solid #dcdde2;padding-right:3px}
h2{margin:0;flex:1;text-align:center;font:bold 9px/14px "DejaVu Sans Condensed",sans-serif;color:#23263a}button{width:7px;height:7px;background:#c94b4b;border:1px solid #a33}button svg{display:block;width:5px;height:5px}
.d{display:block;width:100%;height:auto}`,
 (e,a)=>`<header><h2>${a('caption')}</h2><button aria-label="Chiudi"><svg viewBox="0 0 5 5"><path d="M1 1l3 3M4 1L1 4" stroke="#fff"/></svg></button></header>
<svg class="d" viewBox="${a('box')}" role="img" aria-label="${a('caption')}"><defs><pattern id="tile" width="7" height="6" patternUnits="userSpaceOnUse"><rect width="7" height="6" fill="#6a6865"/><path d="M0 1h3M4 4h3M1 3.500h2" stroke="#7f7c78" stroke-width=".8"/><path d="M3 2.200h3M0 5.300h3" stroke="#5b5955" stroke-width=".8"/></pattern></defs>${a('kind')=='a'?sectionA():sectionB()}</svg>`);

/* ---------- authoring panel ---------- */
define('option-group',`:host{display:block;flex:none;background:#eeeff2;border:1px solid #dcdde2;border-right:0}
h3{display:flex;align-items:center;gap:4px;margin:0;height:9px;padding-left:4px;font-weight:400;font-size:5px;line-height:9px;background:linear-gradient(#e2e3e8,#dcdde2);color:#454656}svg{width:4px;height:4px}`,
 (e,a)=>`<h3>${e.hasAttribute('plain')?'':'<svg viewBox="0 0 4 4"><path d="M.5 3L2 1.500 3.500 3" fill="none" stroke="#555" stroke-width=".7"/></svg>'}${a('caption')}</h3><slot></slot>`);
define('style-button',`:host{display:block}button{display:flex;flex-direction:column;align-items:center;justify-content:center;gap:1px;width:100%;height:21px;white-space:nowrap;border:1px solid transparent}
:host([row]) button{flex-direction:row;height:11px;gap:4px;padding:0 3px}:host([on]) button{background:#dfeafb;border-color:#8db3e6}:host([off]){color:#77787f}:host([row]) ui-icon{width:8px;height:7px}ui-icon{width:9px;height:9px}`,
 (e,a)=>`<button><ui-icon name="${a('icon')}"></ui-icon><slot></slot></button>`);
const rangeCss=`input[type=range]{-webkit-appearance:none;appearance:none;display:block;width:100%;height:8px;background:linear-gradient(90deg,transparent,#cdbfe8 40%,#d9d9e2) 0 3px/100% 1px no-repeat}
input[type=range]::-webkit-slider-thumb{-webkit-appearance:none;width:5px;height:8px;background:linear-gradient(#fff,#e4e4e8);border:1px solid #b4b4bc;border-radius:1px 1px 3px 3px}`;
define('slider-row',`:host{display:block;padding-bottom:9px}label{display:block;height:6px;margin-bottom:4px;padding-left:4px;white-space:nowrap}.s{padding-left:9px}${rangeCss}.t{height:1px;margin:2px 0 0 2px}`,
 (e,a)=>`<label for="r">${a('label')}</label><div class="s"><input id="r" type="range" value="${a('value')}"><div class="t" style="background:repeating-linear-gradient(90deg,#bcbcc4 0 1px,transparent 1px ${a('step')}px)"></div></div>`);
define('cut-row',`:host{display:block;height:34px}label{display:flex;align-items:center;gap:2px;height:8px}input[type=checkbox]{-webkit-appearance:none;appearance:none;width:6px;height:6px;border:1px solid #b2b3bc;background:#fff}.s{padding:4px 0 0 4px}${rangeCss}.t{height:1px;margin:3px 0 0 1px;background:repeating-linear-gradient(90deg,#b4b4bc 0 2px,transparent 2px 3px)}`,
 (e,a)=>`<label><input type="checkbox">${a('label')}</label><div class="s"><input type="range" value="0" aria-label="${a('label')}"><div class="t"></div></div>`);
define('authoring-panel',`:host{display:flex;flex-direction:column;min-width:0;min-height:0;background:#ececf0;border-left:2px solid #c9cad1;overflow:hidden}
.title{display:flex;align-items:center;gap:2px;height:22px;padding-left:1px}.title h1{margin:0;font:bold 9px/14px "Noto Sans",sans-serif;color:#23263a}.title span{padding:1px;border:1px solid #dcdde2}.title ui-icon{width:15px;height:15px}
.body{flex:1;min-height:0;display:grid;grid-template-columns:1fr 6px;background:#f6f6f8}.list{display:flex;flex-direction:column;gap:2px;min-height:0;overflow:hidden;padding:1px 0 0 1px}
.lv{display:flex;gap:4px;padding:2px 3px 3px}.grid{display:grid;grid-template-columns:37px 37px 37px;column-gap:2px;row-gap:2px;padding:2px 2px 4px}
.f{display:grid;grid-template-columns:63px 1fr;row-gap:2px;align-items:center;padding:6px 0 11px 5px}.f input,.f select{width:100%;min-width:0;height:9px;background:#fff;border:1px solid #d9dae0;border-right:0;padding:0 1px;-webkit-appearance:none;appearance:none}.f .n{text-align:right;padding:0}
.c{display:flex;align-items:center;background:#fff;border:1px solid #d9dae0;border-right:0;height:9px}.c i{width:11px;height:5px;background:#e80a0a;border:1px solid #801010;margin:0 1px 0 1px;flex:none}.c input{border:0;height:7px;padding:0 1px}
.r{padding:4px 0 4px}.r>label{display:flex;align-items:center;gap:1px;height:8px;margin:0 0 3px 5px}.r input{-webkit-appearance:none;appearance:none;width:6px;height:6px;border:1px solid #8a8b94;background:#fff}
.r input:checked::after{content:"";display:block;width:4px;height:2px;border:1px solid #222;border-width:0 0 1px 1px;rotate:-45deg}
.vs{display:flex;flex-direction:column;align-items:center;padding:3px 0}.vs b{width:4px;flex:0 1 104px;border:1px solid #c9cad0;background:#e7e7eb;margin-top:2px;border-radius:2px}.vs i{border:2px solid transparent;border-bottom-color:#777;border-top:0}.vs i:last-child{border-top:2px solid #777;border-bottom:0;margin-top:auto}
.hs{display:flex;align-items:center;height:8px;gap:3px;padding:0 10px 0 3px;background:#f4f4f6}.hs b{height:4px;flex:0 1 119px;border:1px solid #c9cad0;background:#e7e7eb;border-radius:2px}.hs i{border:2px solid transparent;border-right-color:#777;border-left:0}.hs i:last-child{border-left:2px solid #777;border-right:0;margin-left:auto}`,
`<panel-head>BIM Authoring</panel-head><div class="title"><span><ui-icon name="set"></ui-icon></span><h1>BIM Authoring</h1></div>
<div class="body"><div class="list">
<option-group plain caption="Livello dettaglio"><div class="lv"><style-button row on icon="basso">Basso</style-button><style-button row icon="medio">Medio</style-button><style-button row icon="alto">Alto</style-button></div></option-group>
<option-group caption="Stile di visualizzazione"><div class="grid"><style-button icon="globe">Bianco e nero</style-button><style-button icon="globec">Colori</style-button><style-button on icon="globec">Materiali</style-button><style-button off icon="persp">Prospettiva</style-button><style-button icon="ombre">Ombre</style-button></div></option-group>
<option-group caption="Opzioni sezioni"><div class="f"><label for="cs">Colore sezione</label><span class="c"><i></i><input id="cs" value="240; 0; 0"></span><label for="sc">Stile copertura oggetto</label><select id="sc"><option>Colore pieno</option></select><label for="sp">Spessore linee dei contorni</label><input id="sp" class="n" value="2,00"></div></option-group>
<option-group caption="Rendered"><div class="r"><label><input type="checkbox" checked>Luce solare agganciata alla camera</label><slider-row label="Direzione orizzontale luce (30):" value="8" step="18"></slider-row><slider-row label="Direzione verticale luce (30):" value="35" step="16"></slider-row><slider-row label="Tonalità della luce ambientale (120):" value="49" step="6"></slider-row></div></option-group>
<option-group caption="Utility"><cut-row label="Taglio orizzontale attivo"></cut-row><cut-row label="Taglio verticale attivo"></cut-row></option-group>
</div><div class="vs"><i></i><b></b><i></i></div></div><div class="hs"><i></i><b></b><i></i></div>`);

/* ---------- status bar ---------- */
define('status-bar',`:host{display:block;background:linear-gradient(#dddee3,#c9cad1 45%,#d5d6dc 48%,#c4c5cd);height:25px;color:#3c3d55}
div{display:flex;align-items:center;height:13px;padding:0 4px 0 3px}.x{width:78px;flex:none;white-space:nowrap}.g{display:flex;gap:5px}button{display:block}.on{background:#e4e5ea;outline:1px solid #aaabb4}.l{margin:0 5px;white-space:nowrap}.d{border:2px solid transparent;border-top-color:#555;border-bottom:0;margin:0 5px 0 1px}i{flex:1}.e{border-left:1px solid #b5b6be;padding-left:4px}`,
()=>{const g=a=>a.map(n=>`<button aria-label="${n}"${n=='line0'?' class="on"':''}><ui-icon name="${n.replace('0','')}"></ui-icon></button>`).join('');
return `<div><span class="x">-9.9255 , 38.6136 , 0.0000 [ ]</span><span class="g">${g(['s1','s2','s3','s4','s5','s6'])}</span><span class="l">SEL. DEFAULT</span><span class="g">${g(['world','half','lens','set'])}</span><span class="d"></span><span class="l">Osnap</span><span class="g">${g(['line0','circ','mid','box','perp','tan','flag','xx','dot','quad','quad','xx','rays','flag'])}</span><i></i><button class="e" aria-label="Avvisi"><ui-icon name="warn"></ui-icon></button></div>`});

/* ---------- application ---------- */
define('bim-app',`:host{display:flex;flex-direction:column;height:100vh;padding:1px 2px 1px 1px;background:#2f4a7d}
.gap{height:2px;background:#cfd0d6;border-bottom:1px solid #c0c1c8}
main{flex:1;min-height:0;display:grid;grid-template-columns:15px 124px minmax(0,1fr) 161px 12px;background:#ececf0}
.center{display:grid;grid-template-rows:144fr 247fr;border-left:2px solid #c6c7ce;min-height:0}
.ld{border-right:1px solid #d3d4da}.rd{border-left:1px solid #d3d4da}`,
`<title-bar></title-bar><ribbon-tabs></ribbon-tabs><ribbon-bar></ribbon-bar><div class="gap"></div>
<main><nav class="ld"><dock-tab big on icon="dock">Struttura</dock-tab><dock-tab icon="filter">Filtri</dock-tab></nav>
<structure-panel></structure-panel>
<div class="center"><section-view kind="a" box="142 86 583 129" caption="Sezione A - A'"></section-view><section-view kind="b" box="142 231 583 120" caption="Sezione B - B'"></section-view></div>
<authoring-panel></authoring-panel>
<nav class="rd"><dock-tab icon="prop">Proprietà</dock-tab><dock-tab icon="gear">Entità</dock-tab><dock-tab icon="palette">Materiali</dock-tab><dock-tab icon="spec">Specifiche</dock-tab><dock-tab icon="set">Disegno CAD</dock-tab><dock-tab on icon="set">BIM Authoring</dock-tab><dock-tab icon="ifc">IPC</dock-tab></nav></main>
<status-bar></status-bar>`);
</script>
</body>
</html>
